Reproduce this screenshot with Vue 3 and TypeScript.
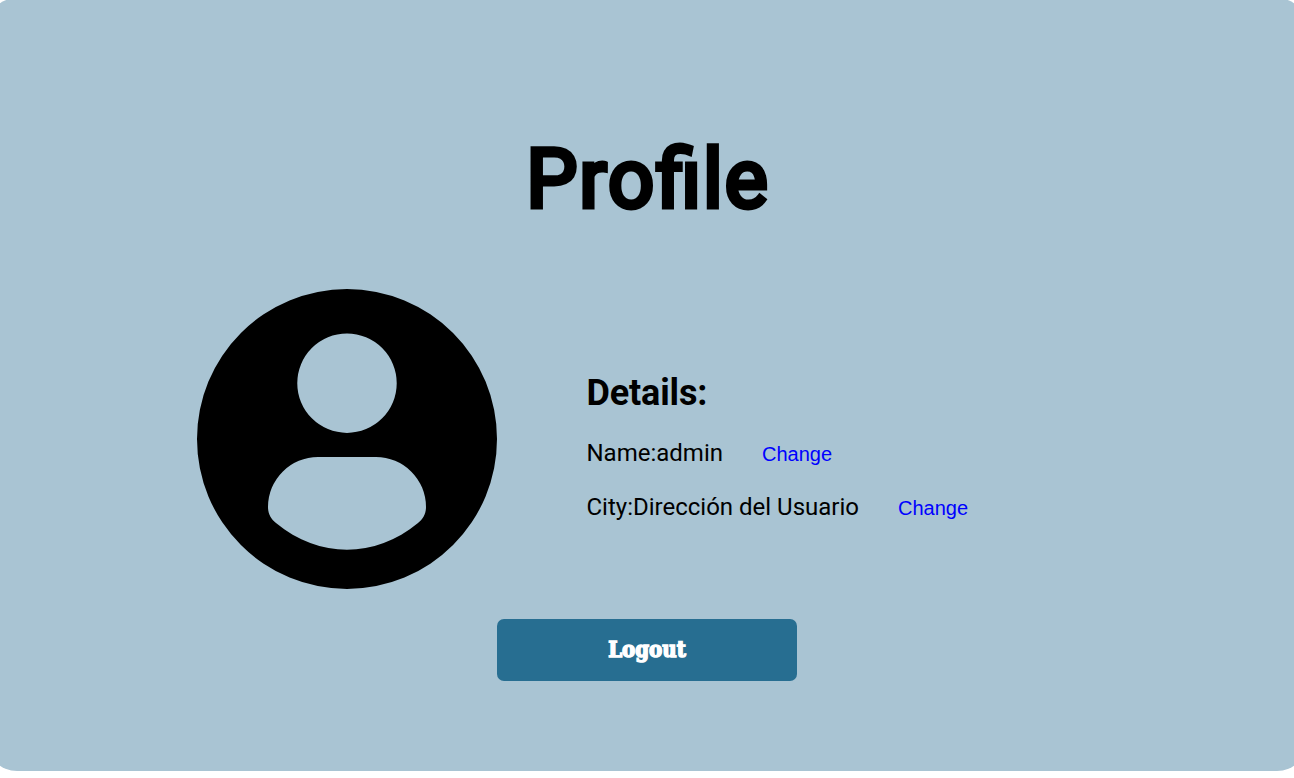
<script setup lang="ts">
interface Detail {
  label: string
  value: string
}

const details: Detail[] = [
  { label: 'Name', value: 'admin' },
  { label: 'City', value: 'Dirección del Usuario' },
]
</script>

<template>
  <div class="page">
    <main class="card">
      <h1 class="title">Profile</h1>
      <section class="profile">
        <svg class="avatar" viewBox="0 0 300 300" aria-hidden="true">
          <path
            fill-rule="evenodd"
            d="M150 0a150 150 0 1 1 0 300a150 150 0 1 1 0-300z M150 44.5a49.7 49.7 0 1 0 0 99.4a49.7 49.7 0 1 0 0-99.4z M121 168A50 50 0 0 0 71 218C71 225 74 230 79 234C122 269.500 178 269.500 221 234C226 230 229 225 229 218A50 50 0 0 0 179 168z"
          />
        </svg>
        <div class="details">
          <h2 class="subtitle">Details:</h2>
          <div v-for="item in details" :key="item.label" class="row">
            <span class="text">{{ item.label }}:{{ item.value }}</span>
            <button type="button" class="change">Change</button>
          </div>
        </div>
      </section>
      <button type="button" class="logout">Logout</button>
    </main>
  </div>
</template>

<style>
body {
  background: #fff;
}
</style>

<style scoped>
.page {
  height: 778px;
  overflow: hidden;
  display: flex;
  font-family: Roboto, sans-serif;
  color: #000;
}

.card {
  box-sizing: border-box;
  flex: 1 0 auto;
  height: 773px;
  margin: -2px -13px 0;
  padding: 122px 210px 0;
  border-radius: 30px;
  background: #a9c4d3;
  display: flex;
  flex-direction: column;
}

.title {
  margin: 0;
  height: 120px;
  line-height: 119px;
  font-size: 81px;
  font-weight: 400;
  letter-spacing: 2px;
  font-feature-settings: "liga" 1;
  -webkit-text-stroke: 4.800px #000;
  text-align: center;
  text-indent: 2px;
}

.profile {
  display: flex;
  gap: 89.5px;
  margin-top: 49px;
}

.avatar {
  width: 300px;
  height: 300px;
  flex: none;
}

.details {
  padding-top: 82px;
}

.subtitle {
  margin: 0 0 17px;
  padding-top: 1px;
  font-size: 36px;
  line-height: 42px;
  font-weight: 700;
  letter-spacing: -0.15px;
}

.row {
  display: flex;
  align-items: center;
  gap: 39px;
  height: 44px;
  margin-bottom: 10px;
}

.text {
  font-size: 24px;
  line-height: 28px;
  white-space: pre;
}

.change {
  padding: 2px 0 0;
  border: 0;
  background: none;
  color: #00f;
  font: 20px/24px "Liberation Sans", Arial, sans-serif;
}

.logout {
  align-self: center;
  width: 300px;
  height: 62px;
  margin-top: 30px;
  padding: 0 0 2px;
  border: 0;
  border-radius: 7px;
  background: #276e91;
  color: #fff;
  font: 700 22px/28px "DejaVu Serif Condensed", "DejaVu Serif", serif;
  font-stretch: condensed;
  -webkit-text-stroke: 1.400px #fff;
}
</style>
